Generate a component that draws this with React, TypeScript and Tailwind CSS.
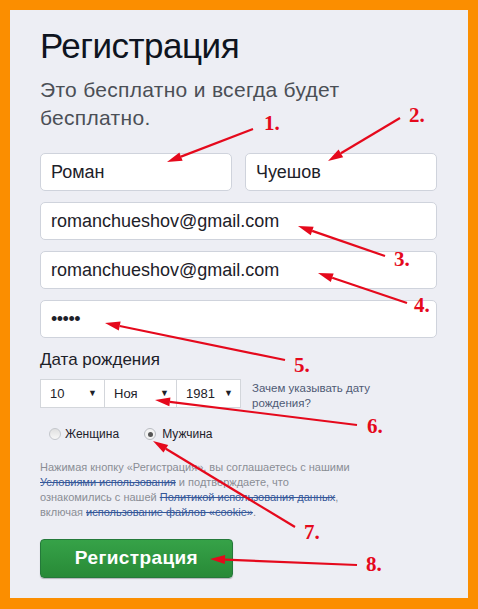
const arrows = [
  { x1: 253, y1: 129, x2: 167, y2: 162 },
  { x1: 400, y1: 118, x2: 328, y2: 161 },
  { x1: 385, y1: 256, x2: 298, y2: 226 },
  { x1: 407, y1: 303, x2: 318, y2: 273 },
  { x1: 285, y1: 360, x2: 105, y2: 323 },
  { x1: 357, y1: 425, x2: 155, y2: 400 },
  { x1: 295, y1: 527, x2: 153, y2: 441 },
  { x1: 357, y1: 565, x2: 210, y2: 559 },
]

const labels = [
  { n: '1.', x: 264, y: 130 },
  { n: '2.', x: 409, y: 122 },
  { n: '3.', x: 394, y: 266 },
  { n: '4.', x: 414, y: 312 },
  { n: '5.', x: 294, y: 372 },
  { n: '6.', x: 367, y: 433 },
  { n: '7.', x: 304, y: 539 },
  { n: '8.', x: 366, y: 571 },
]

const Arrow = ({ x1, y1, x2, y2 }: { x1: number; y1: number; x2: number; y2: number }) => {
  const dx = x2 - x1
  const dy = y2 - y1
  const len = Math.sqrt(dx * dx + dy * dy)
  const ux = dx / len
  const uy = dy / len
  const hl = 15
  const hw = 4.5
  const bx = x2 - ux * hl
  const by = y2 - uy * hl
  const pts = `${x2},${y2} ${bx - uy * hw},${by + ux * hw} ${bx + uy * hw},${by - ux * hw}`
  return (
    <g>
      <line x1={x1} y1={y1} x2={bx} y2={by} stroke="#e5091c" strokeWidth={2.2} />
      <polygon points={pts} fill="#e5091c" />
    </g>
  )
}

const Field = ({ value, className = '' }: { value: string; className?: string }) => (
  <div className={`h-[38px] bg-white border border-[#cfd3dc] rounded-[5px] flex items-center pl-[10px] text-[18px] text-[#1d2129] ${className}`}>
    {value}
  </div>
)

const Select = ({ value, w }: { value: string; w: string }) => (
  <div className={`${w} h-[29px] bg-white border border-[#d3d6db] flex items-center justify-between pl-[9px] pr-[7px] text-[13px] text-[#1d2129]`}>
    <span>{value}</span>
    <span className="text-[9px]">▼</span>
  </div>
)

const App = () => {
  return (
    <div className="relative w-[478px] h-[609px] bg-[#fb8e00] p-[10px] pb-[11px] font-['Liberation_Sans',Arial,sans-serif]">
      <div className="h-full bg-[#edeef4] pl-[30px] pr-[31px] pt-[16px]">
        <h1 className="text-[35px] leading-[40px] text-[#0e1420] tracking-[-0.5px]">Регистрация</h1>
        <p className="mt-[10px] text-[21px] leading-[28px] text-[#4b4f56] tracking-[0.3px] w-fit">
          Это бесплатно и всегда будет
          <br />
          бесплатно.
        </p>

        <div className="mt-[21px] flex flex-col gap-[11px]">
          <div className="flex gap-[13px]">
            <Field value="Роман" className="flex-1" />
            <Field value="Чуешов" className="flex-1" />
          </div>
          <Field value="romanchueshov@gmail.com" />
          <Field value="romanchueshov@gmail.com" />
          <Field value="•••••" className="text-[15px] tracking-[-0.5px]" />
        </div>

        <div className="mt-[11px] text-[17px] leading-[22px] text-[#1d2129]">Дата рождения</div>

        <div className="mt-[8px] flex items-start">
          <div className="flex">
            <Select value="10" w="w-[65px]" />
            <Select value="Ноя" w="w-[73px] -ml-px" />
            <Select value="1981" w="w-[65px] -ml-px" />
          </div>
          <div className="ml-[11px] mt-[2px] text-[11.5px] leading-[15px] text-[#4f5a74] w-[125px]">Зачем указывать дату рождения?</div>
        </div>

        <div className="mt-[14px] flex items-center text-[12px] text-[#1d2129] pl-[9px]">
          <span className="w-[12px] h-[12px] rounded-full border border-[#c4c7cc] bg-gradient-to-b from-[#e0e0e0] to-[#f7f7f7]" />
          <span className="ml-[4px]">Женщина</span>
          <span className="ml-[25px] w-[12px] h-[12px] rounded-full border border-[#b9bcc2] bg-[#f3f3f3] flex items-center justify-center">
            <span className="w-[5px] h-[5px] rounded-full bg-[#555]" />
          </span>
          <span className="ml-[6px]">Мужчина</span>
        </div>

        <p className="mt-[17px] text-[11px] leading-[15px] text-[#8a8d94]">
          Нажимая кнопку «Регистрация», вы соглашаетесь с нашими
          <br />
          <span className="text-[#365899] line-through">Условиями использования</span> и подтверждаете, что
          <br />
          ознакомились с нашей <span className="text-[#365899] line-through">Политикой использования данных</span>,
          <br />
          включая <span className="text-[#365899] line-through">использование файлов «cookie»</span>.
        </p>

        <button className="mt-[19px] w-[193px] h-[39px] rounded-[4px] border border-[#24793a] bg-gradient-to-b from-[#36a248] to-[#288a37] text-white text-[19px] font-bold tracking-[0.4px] shadow-[0_1px_1px_rgba(0,0,0,0.25)] font-['Liberation_Sans',Arial,sans-serif]">
          Регистрация
        </button>
      </div>

      <svg className="absolute inset-0 pointer-events-none" width={478} height={609} viewBox="0 0 478 609">
        {arrows.map((a, i) => (
          <Arrow key={i} {...a} />
        ))}
        {labels.map((l) => (
          <text key={l.n} x={l.x} y={l.y} fill="#e5091c" fontSize={21} fontWeight="bold" fontFamily="'Liberation Serif', 'Times New Roman', serif">
            {l.n}
          </text>
        ))}
      </svg>
    </div>
  )
}

export default App
